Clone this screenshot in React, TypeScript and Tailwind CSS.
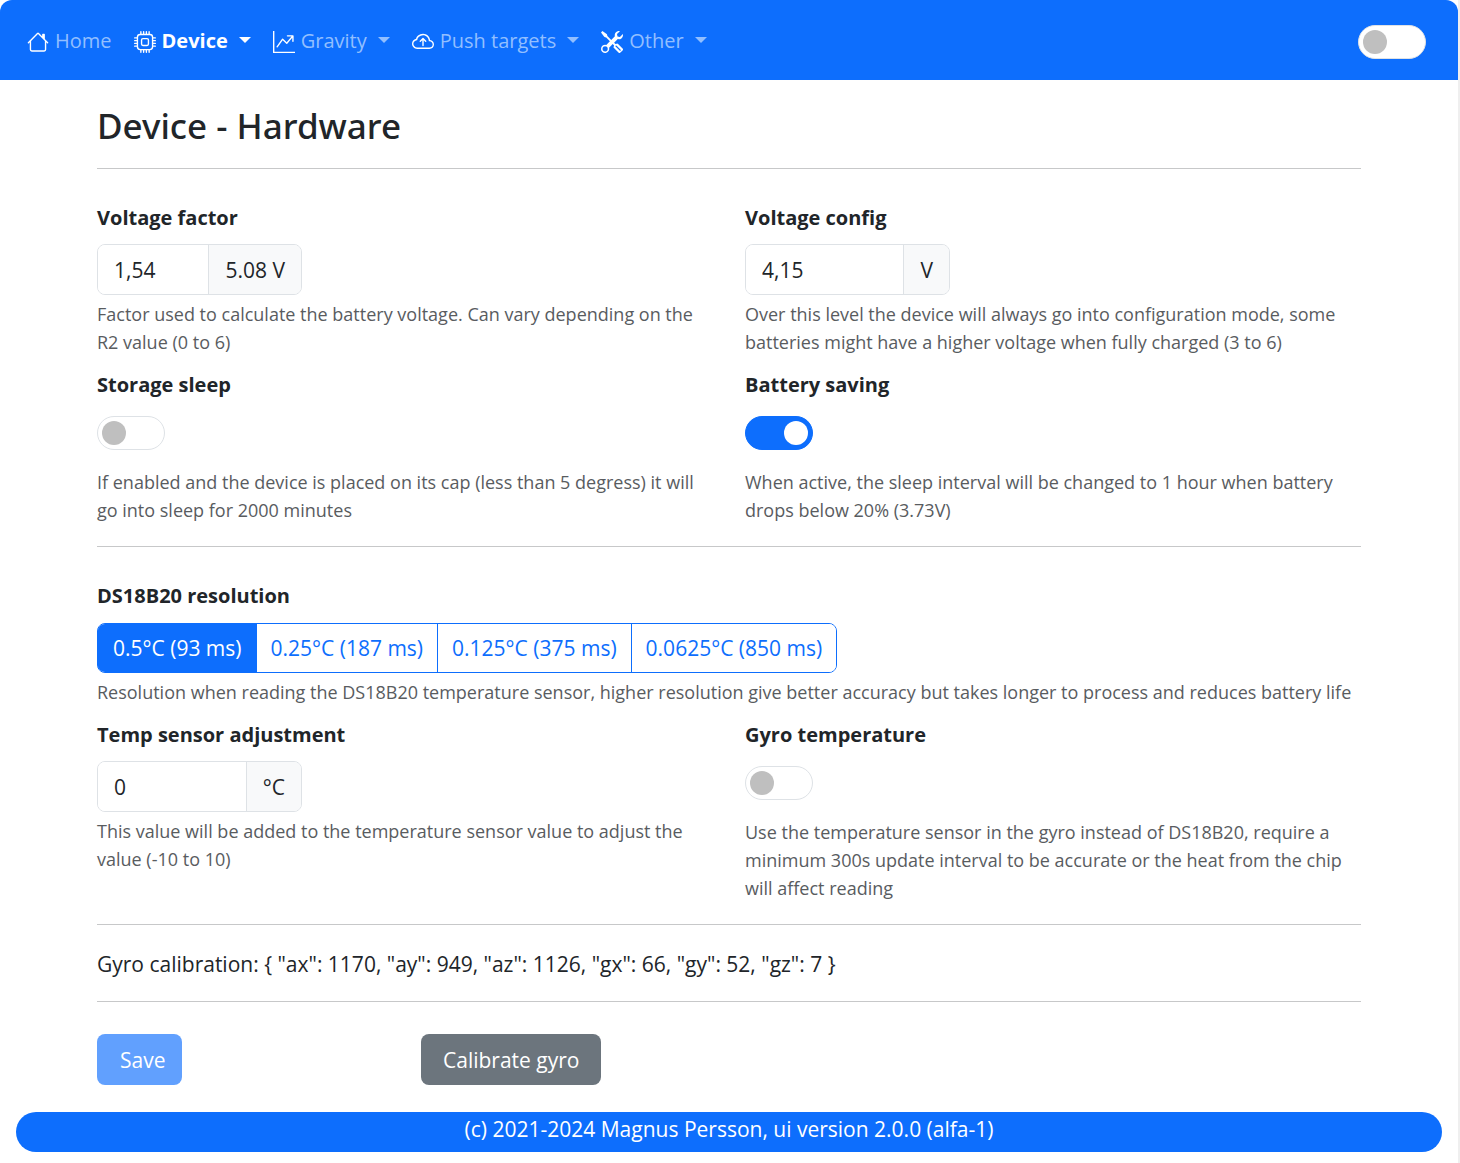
import { useState } from "react";
import type { ReactNode } from "react";
import { BsHouse, BsCpu, BsGraphUpArrow, BsCloudArrowUp, BsTools } from "react-icons/bs";

function Caret() {
  return (
    <span className="ml-[11px] mb-0.5 border-x-[6px] border-t-[6px] border-x-transparent border-t-current" />
  );
}

function NavItem({ icon, label, active = false }: { icon: ReactNode; label: string; active?: boolean }) {
  return (
    <li>
      <button
        type="button"
        className={
          active
            ? "flex items-center font-bold text-white"
            : "flex items-center text-[#92bfff]"
        }
      >
        <span className="mr-1.5 mt-0.5 text-white">{icon}</span>
        {label}
        <Caret />
      </button>
    </li>
  );
}

function Switch({ id, label, defaultChecked = false }: { id: string; label?: string; defaultChecked?: boolean }) {
  return (
    <input
      id={id}
      type="checkbox"
      role="switch"
      aria-label={label}
      defaultChecked={defaultChecked}
      className="flex h-[34px] w-[68px] shrink-0 appearance-none items-center rounded-full border border-[#dee2e6] bg-white px-1 before:size-6 before:rounded-full before:bg-[#bfbfbf] before:content-[''] checked:justify-end checked:border-[#0d6efd] checked:bg-[#0d6efd] checked:before:bg-white"
    />
  );
}

function FieldLabel({ htmlFor, children }: { htmlFor: string; children: ReactNode }) {
  return (
    <label htmlFor={htmlFor} className="block text-[20px] leading-[34px] font-bold">
      {children}
    </label>
  );
}

function Help({ children }: { children: ReactNode }) {
  return <p className="text-[18px] leading-7 text-[#595c5f]">{children}</p>;
}

function NumberField({ id, label, value, unit, help }: { id: string; label: string; value: string; unit: string; help: string }) {
  return (
    <div>
      <FieldLabel htmlFor={id}>{label}</FieldLabel>
      <div className="mt-[9px] mb-[5px] flex h-[51px] w-[205px] overflow-hidden rounded-lg border border-[#dee2e6]">
        <input id={id} type="text" defaultValue={value} className="min-w-0 flex-1 bg-white px-4 outline-none" />
        <span className="flex items-center border-l border-[#dee2e6] bg-[#f8f9fa] px-4">{unit}</span>
      </div>
      <Help>{help}</Help>
    </div>
  );
}

function SwitchField({ id, label, help, checked = false }: { id: string; label: string; help: string; checked?: boolean }) {
  return (
    <div>
      <FieldLabel htmlFor={id}>{label}</FieldLabel>
      <div className="mt-3.5 mb-[18px]">
        <Switch id={id} defaultChecked={checked} />
      </div>
      <Help>{help}</Help>
    </div>
  );
}

const resolutions = ["0.5°C (93 ms)", "0.25°C (187 ms)", "0.125°C (375 ms)", "0.0625°C (850 ms)"];

function ResolutionPicker() {
  const [selected, setSelected] = useState(0);
  return (
    <fieldset>
      <legend className="text-[20px] leading-[34px] font-bold">DS18B20 resolution</legend>
      <div className="mt-2.5 mb-[5px] flex h-[50px] w-fit overflow-hidden rounded-lg border border-[#0d6efd]">
        {resolutions.map((text, i) => (
          <label
            key={text}
            className={
              i === selected
                ? "flex cursor-pointer items-center border-l border-[#0d6efd] bg-[#0d6efd] px-3.5 text-white"
                : "flex cursor-pointer items-center border-l border-[#0d6efd] bg-white px-3.5 text-[#0d6efd]"
            }
          >
            <input
              type="radio"
              name="resolution"
              className="sr-only"
              checked={i === selected}
              onChange={() => setSelected(i)}
            />
            {text}
          </label>
        ))}
      </div>
      <Help>
        Resolution when reading the DS18B20 temperature sensor, higher resolution give better accuracy but takes longer
        to process and reduces battery life
      </Help>
    </fieldset>
  );
}

export default function App() {
  return (
    <div className="min-h-screen border-r-2 border-[#efefef] bg-white pb-[11px] font-['Open_Sans',sans-serif] text-[21px] leading-[34px] text-[#212529]">
      <nav className="flex h-20 items-center justify-between rounded-t-xl bg-[#0d6efd] pt-0.5 pr-8 pl-[27px] text-[20px]">
        <ul className="flex items-center gap-[22px]">
          <li>
            <a href="#home" className="flex items-center text-[#92bfff]">
              <BsHouse className="mt-0.5 mr-1.5 size-[22px] text-white" />
              Home
            </a>
          </li>
          <NavItem icon={<BsCpu className="size-[22px]" />} label="Device" active />
          <NavItem icon={<BsGraphUpArrow className="size-[22px]" />} label="Gravity" />
          <NavItem icon={<BsCloudArrowUp className="size-[22px]" />} label="Push targets" />
          <NavItem icon={<BsTools className="size-[22px]" />} label="Other" />
        </ul>
        <div className="mt-0.5">
          <Switch id="theme" label="Dark mode" />
        </div>
      </nav>

      <main className="mx-auto max-w-[1296px] px-4">
        <h1 className="pt-6 font-['Noto_Sans',sans-serif] text-[35px] leading-[44px] font-medium">Device - Hardware</h1>
        <hr className="mt-5 border-[#c7c8c9]" />

        <section className="mt-8 grid grid-cols-2 gap-x-8 gap-y-3">
          <NumberField
            id="voltage-factor"
            label="Voltage factor"
            value="1,54"
            unit="5.08 V"
            help="Factor used to calculate the battery voltage. Can vary depending on the R2 value (0 to 6)"
          />
          <NumberField
            id="voltage-config"
            label="Voltage config"
            value="4,15"
            unit="V"
            help="Over this level the device will always go into configuration mode, some batteries might have a higher voltage when fully charged (3 to 6)"
          />
          <SwitchField
            id="storage-sleep"
            label="Storage sleep"
            help="If enabled and the device is placed on its cap (less than 5 degress) it will go into sleep for 2000 minutes"
          />
          <SwitchField
            id="battery-saving"
            label="Battery saving"
            checked
            help="When active, the sleep interval will be changed to 1 hour when battery drops below 20% (3.73V)"
          />
        </section>
        <hr className="mt-[22px] border-[#c7c8c9]" />

        <section className="mt-8">
          <ResolutionPicker />
          <div className="mt-3 grid grid-cols-2 gap-x-8">
            <NumberField
              id="temp-adjustment"
              label="Temp sensor adjustment"
              value="0"
              unit="°C"
              help="This value will be added to the temperature sensor value to adjust the value (-10 to 10)"
            />
            <SwitchField
              id="gyro-temperature"
              label="Gyro temperature"
              help="Use the temperature sensor in the gyro instead of DS18B20, require a minimum 300s update interval to be accurate or the heat from the chip will affect reading"
            />
          </div>
        </section>
        <hr className="mt-[22px] border-[#c7c8c9]" />

        <p className="mt-[22px]">
          {'Gyro calibration: { "ax": 1170, "ay": 949, "az": 1126, "gx": 66, "gy": 52, "gz": 7 }'}
        </p>
        <hr className="mt-5 border-[#c7c8c9]" />

        <div className="mt-8 grid grid-cols-4 gap-x-8">
          <button type="button" disabled className="h-[51px] w-fit rounded-lg bg-[#61a0fe] pr-[17px] pl-[23px] text-white">
            Save
          </button>
          <button type="button" className="h-[51px] w-fit rounded-lg bg-[#6c757d] px-[22px] whitespace-nowrap text-white">
            Calibrate gyro
          </button>
        </div>
      </main>

      <footer className="mx-4 mt-[27px] h-10 rounded-full bg-[#0d6efd] text-center text-white">
        (c) 2021-2024 Magnus Persson, ui version 2.0.0 (alfa-1)
      </footer>
    </div>
  );
}
